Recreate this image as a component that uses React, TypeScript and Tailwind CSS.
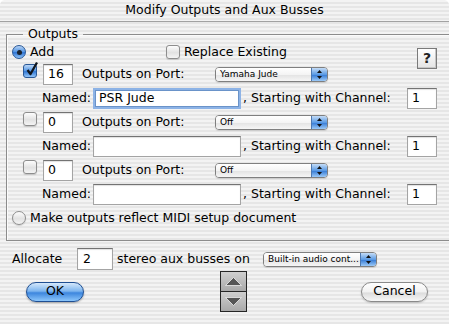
import React from 'react'

// Aqua-era "Modify Outputs and Aux Busses" sheet.

const STRIPES =
  'bg-[image:repeating-linear-gradient(180deg,#f3f3f3_0px,#f3f3f3_2px,#e6e6e6_2px,#e6e6e6_4px)]'

function Radio({ on }: { on?: boolean }) {
  return on ? (
    <span className="inline-flex items-center justify-center w-[14px] h-[14px] rounded-full border border-[#2a5896] bg-[linear-gradient(#b9d5f6,#4f92e2_50%,#2f74d2_55%,#8ec3f9)] shrink-0">
      <span className="w-[5px] h-[5px] rounded-full bg-[#1b2430]" />
    </span>
  ) : (
    <span className="inline-block w-[14px] h-[14px] rounded-full border border-[#8d8d8d] bg-[linear-gradient(#fdfdfd,#e2e2e2_55%,#f4f4f4)] shadow-[0_1px_1px_rgba(0,0,0,0.15)] shrink-0" />
  )
}

function Check({ on }: { on?: boolean }) {
  if (on) {
    return (
      <span className="relative inline-block w-[14px] h-[14px] rounded-[3px] border border-[#2a5896] bg-[linear-gradient(#bcd7f7,#5396e4_50%,#3379d4_55%,#93c6fa)] shrink-0">
        <svg className="absolute -top-[4px] left-[1px]" width="14" height="16" viewBox="0 0 14 16" aria-hidden>
          <path d="M2.5 9 L5.5 13 L12 1.5" stroke="#10161e" strokeWidth="2.3" fill="none" strokeLinejoin="round" />
        </svg>
      </span>
    )
  }
  return (
    <span className="inline-block w-[14px] h-[14px] rounded-[3px] border border-[#8d8d8d] bg-[linear-gradient(#fdfdfd,#e2e2e2_55%,#f4f4f4)] shadow-[0_1px_1px_rgba(0,0,0,0.15)] shrink-0" />
  )
}

function Field({ value, w, focus }: { value?: string; w: string; focus?: boolean }) {
  return (
    <div
      className={
        w +
        ' h-[21px] shrink-0 bg-white flex items-center pl-[4px] text-[12.5px] ' +
        (focus
          ? 'border-2 border-[#8db3e6] shadow-[inset_0_0_0_1px_#6a93c9]'
          : 'border border-[#a4a4a4] border-t-[#737373] shadow-[inset_0_1px_1px_rgba(0,0,0,0.12)]')
      }
    >
      {value}
    </div>
  )
}

function Popup({ label, w }: { label: string; w: string }) {
  return (
    <div className={w + ' h-[15px] shrink-0 flex rounded-[4px] border border-[#7f7f7f] overflow-hidden shadow-[0_1px_1px_rgba(0,0,0,0.12)]'}>
      <span className="flex-1 pl-[4px] text-[9px] leading-[13px] whitespace-nowrap overflow-hidden bg-[linear-gradient(#ffffff,#f4f4f4_50%,#e4e4e4_55%,#f6f6f6)]">
        {label}
      </span>
      <span className="w-[16px] flex items-center justify-center border-l border-[#4d78b0] bg-[linear-gradient(#c4dcf7,#5b9be4_50%,#3a7ed6_55%,#9ccaf8)]">
        <svg width="7" height="11" viewBox="0 0 7 11" aria-hidden>
          <path d="M3.5 1 L6 4 L1 4 Z" fill="#111" />
          <path d="M3.5 10 L6 7 L1 7 Z" fill="#111" />
        </svg>
      </span>
    </div>
  )
}

function PortRows({ count, port, name, focus }: { count: string; port: string; name?: string; focus?: boolean }) {
  return (
    <>
      <div className="h-[24px] flex items-center">
        <span className="ml-[11px]">
          <Check on={count !== '0'} />
        </span>
        <span className="ml-[6px]">
          <Field value={count} w="w-[30px]" />
        </span>
        <span className="ml-[9px] w-[133px] whitespace-nowrap">Outputs on Port:</span>
        <Popup label={port} w="w-[113px]" />
      </div>
      <div className="h-[24px] flex items-center">
        <span className="ml-[30px] w-[51px]">Named:</span>
        <Field value={name} w="w-[148px]" focus={focus} />
        <span className="ml-[2px] w-[164px] whitespace-nowrap">, Starting with Channel:</span>
        <Field value="1" w="w-[30px]" />
      </div>
    </>
  )
}

function Stepper() {
  return (
    <div className="w-[27px] h-[41px] flex flex-col border border-[#262626] shrink-0">
      <div className="h-[20px] flex items-center justify-center border-b border-[#262626] bg-[linear-gradient(#cfcfcf,#a9a9a9)]">
        <svg width="17" height="9" viewBox="0 0 17 9" aria-hidden>
          <path d="M8.5 0.5 L16.5 8.5 L0.5 8.5 Z" fill="#555" stroke="#eee" strokeWidth="0.8" />
        </svg>
      </div>
      <div className="flex-1 flex items-center justify-center bg-[linear-gradient(#cfcfcf,#a9a9a9)]">
        <svg width="17" height="9" viewBox="0 0 17 9" aria-hidden>
          <path d="M0.5 0.5 L16.5 0.5 L8.5 8.5 Z" fill="#555" stroke="#eee" strokeWidth="0.8" />
        </svg>
      </div>
    </div>
  )
}

export default function App() {
  return (
    <div className="w-[449px] h-[324px] bg-white">
      <div
        className={
          STRIPES +
          " w-full h-full rounded-t-[5px] overflow-hidden flex flex-col text-black text-[12.5px] font-['Lucida_Grande','DejaVu_Sans',sans-serif]"
        }
      >
        <div className="h-[22px] shrink-0 flex items-center justify-center border-b border-[#a2a2a2]">
          Modify Outputs and Aux Busses
        </div>

        <fieldset className="mt-[4px] ml-[6px] mr-[4px] border border-[#8c8c8c] shadow-[inset_1px_1px_0_#fbfbfb] pl-[5px] pr-[12px] pb-[10px]">
          <legend className="ml-[11px] px-[5px] leading-[16px]">Outputs</legend>

          <div className="h-[20px] flex items-center">
            <div className="w-[154px] flex items-center">
              <Radio on />
              <span className="ml-[4px]">Add</span>
            </div>
            <Check />
            <span className="ml-[4px]">Replace Existing</span>
            <span className="flex-1" />
            <button
              type="button"
              className="translate-y-[6px] w-[20px] h-[21px] flex items-center justify-center border border-[#7a7a7a] bg-[linear-gradient(#ffffff,#e4e4e4)] shadow-[inset_-1px_-1px_0_#c6c6c6] font-bold text-[14px] text-[#222]"
            >
              ?
            </button>
          </div>

          <PortRows count="16" port="Yamaha Jude" name="PSR Jude" focus />
          <PortRows count="0" port="Off" />
          <PortRows count="0" port="Off" />

          <div className="h-[24px] flex items-center">
            <Radio />
            <span className="ml-[4px]">Make outputs reflect MIDI setup document</span>
          </div>
        </fieldset>

        <div className="mt-[7px] h-[22px] flex items-center">
          <span className="ml-[12px] w-[65px]">Allocate</span>
          <div className="w-[36px] h-[22px] bg-white flex items-center pl-[5px] border border-[#a4a4a4] border-t-[#737373] shadow-[inset_0_1px_1px_rgba(0,0,0,0.12)]">
            2
          </div>
          <span className="ml-[4px] w-[146px] whitespace-nowrap">stereo aux busses on</span>
          <Popup label="Built-in audio cont..." w="w-[114px]" />
        </div>

        <div className="mt-[1px] h-[41px] flex items-center">
          <button
            type="button"
            className="ml-[26px] w-[58px] h-[20px] rounded-full border border-[#1f4f93] bg-[linear-gradient(#d5e8fb,#7db5ef_45%,#3d86de_55%,#8cc6fb)] shadow-[0_1px_2px_rgba(0,0,0,0.3)] flex items-center justify-center"
          >
            OK
          </button>
          <span className="ml-[136px]">
            <Stepper />
          </span>
          <button
            type="button"
            className="ml-[114px] w-[67px] h-[20px] rounded-full border border-[#8a8a8a] bg-[linear-gradient(#ffffff,#f1f1f1_50%,#dcdcdc_55%,#f7f7f7)] shadow-[0_1px_2px_rgba(0,0,0,0.2)] flex items-center justify-center"
          >
            Cancel
          </button>
        </div>
      </div>
    </div>
  )
}
